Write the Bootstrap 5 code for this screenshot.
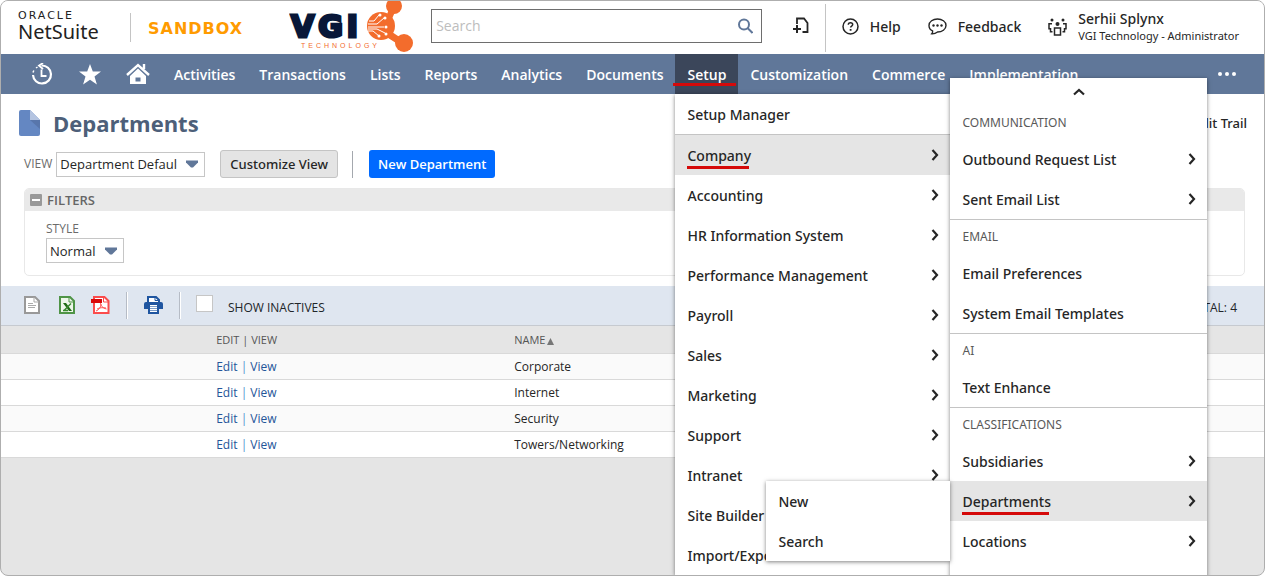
<!DOCTYPE html>
<html lang="en">
<head>
<meta charset="utf-8">
<meta name="viewport" content="width=device-width, initial-scale=1">
<title>Departments - NetSuite</title>
<link href="https://cdn.jsdelivr.net/npm/bootstrap@5.3.0/dist/css/bootstrap.min.css" rel="stylesheet">
<style>
  body { font-family: "Open Sans", "Noto Sans", sans-serif; font-size: 13px; line-height: 20px; color: #262626; background: #fff; }
  a { text-decoration: none; color: inherit; }
  svg { display: block; flex: none; }
  .page-frame { border: 1px solid #aeaeae; border-radius: 8px; background: #e5e5e5; }
  .medium { font-family: "Noto Sans", sans-serif; font-weight: 500; }

  .top-bar { height: 53px; background: #fff; padding: 0 25px 0 17px; }
  .brand { width: 81px; padding-bottom: 4px; }
  .brand-oracle { font: 11px/13px "DejaVu Sans", sans-serif; letter-spacing: 2px; color: #222; }
  .brand-suite { font: 20px/20px "Noto Sans", sans-serif; color: #222; }
  .rule { width: 1px; background: #c4c4c4; }
  .rule-brand { height: 29px; margin: 0 17px 0 31px; }
  .rule-top { height: 48px; margin: 0 16px; }
  .rule-view { height: 27px; margin: 0 16px 0 14px; background: #a4a8ae; }
  .sandbox-tag { font: bold 16px/20px "DejaVu Sans", sans-serif; color: #ff9b00; letter-spacing: 1px; padding-top: 2px; }
  .vgi-logo { margin: 0 16px 0 46px; }
  .search-box { border: 1px solid #6e6e6e; height: 34px; margin-right: 31px; margin-bottom: 3px; }
  .search-box input { font-size: 14px; color: #262626; outline: 0; }
  .search-box input::placeholder { color: #bdbdbd; }
  .top-link { font-size: 14px; gap: 11px; margin-right: 27px; padding-bottom: 2px; }
  .user-link { gap: 11px; padding-bottom: 1px; }
  .user-name { font-size: 14px; line-height: 18px; }
  .user-role { font-size: 11px; line-height: 16px; font-weight: 400; }

  .main-nav { background: #607799; height: 40px; padding: 0 17px; }
  .main-nav .nav-cell { position: relative; display: flex; align-items: center; height: 40px; padding: 2px 12px 0; color: #fff; font-size: 14px; font-weight: 600; white-space: nowrap; }
  .main-nav .nav-icon { width: 48px; padding: 0; justify-content: center; }
  .main-nav .more-cell { margin-right: -4px; }
  .main-nav .current { background: #3b465a; }
  .marked { position: relative; }
  .marked::after { content: ""; position: absolute; left: 0; right: 2px; bottom: -3px; height: 3px; background: #d50a0a; }
  .nav-cell.marked::after { left: -2px; bottom: 8px; }

  .fly { position: absolute; background: #fff; box-shadow: 0 1px 4px rgba(0,0,0,.5); margin: 0; padding: 0; list-style: none; color: #262626; font-size: 14px; z-index: 10; }
  .fly-setup { left: 0; top: 100%; width: 275px; }
  .fly-company { left: 100%; top: -57px; width: 257px; min-height: 520px; }
  .fly-departments { right: 100%; top: 0; width: 184px; }
  .fly li { position: relative; }
  .fly .entry { display: flex; align-items: center; justify-content: space-between; height: 40px; padding: 2px 12px 0; }
  .fly .entry svg { margin: 0 -1px 2px 0; }
  .fly .open > .entry { background: #e5e5e5; }
  .fly .first-entry { border-bottom: 1px solid #c4c4c4; }
  .fly .group-title { height: 33px; padding: 7px 12px 0; font-size: 12px; font-weight: 400; color: #595959; }
  .fly .ruled { height: 34px; border-top: 1px solid #c4c4c4; }
  .fly .scroll-up { height: 28px; width: 100%; border: 0; background: none; display: flex; align-items: center; justify-content: center; }

  .content-area { background: #fff; padding: 14px 17px 10px 18px; }
  .page-title { font-size: 22px; line-height: 30px; font-weight: 700; color: #4d5f79; margin: 0 0 0 13px; }
  .field-tag { font-size: 12px; color: #6b6b6b; }
  .view-row { margin-top: 12px; padding-left: 5px; }
  .pick { appearance: none; height: 25px; border: 1px solid #c6c6c6; border-radius: 0; padding: 0 27px 0 3px; font-size: 13px; color: #262626;
    background: #fff url("data:image/svg+xml,%3Csvg xmlns='http://www.w3.org/2000/svg' width='14' height='8'%3E%3Cpath d='M1 .5h12v2L8 7.5H6L1 2.500z' fill='%23607799'/%3E%3C/svg%3E") no-repeat right 5px center; }
  .pick-view { width: 149px; margin-right: 15px; }
  .pick-style { width: 78px; }
  .act { height: 28px; border-radius: 3px; font-size: 13px; line-height: 20px; padding: 0 9px; }
  .act-plain { background: #e4e4e4; border: 1px solid #c4c4c4; color: #262626; }
  .act-main { background: #006aff; border: 0; color: #fff; font-weight: 600; }
  .filter-box { border: 1px solid #e8e8e8; border-radius: 5px; margin: 10px 2px 0 5px; height: 88px; overflow: hidden; }
  .filter-head { background: #e9e9e9; height: 22px; font-size: 13px; font-weight: 600; color: #666; padding: 0 5px; gap: 5px; }
  .filter-body { padding: 8px 21px 0; }
  .filter-body .field-tag { line-height: 19px; }
  .tool-bar { background: #dfe6f0; height: 39px; padding: 0 27px 0 23px; }
  .tool-bar button { margin-bottom: 2px; }
  .tool-bar .divider { width: 2px; height: 27px; background: #b6bcc6; border-right: 1px solid #fff; }
  .tool-excel { margin-left: 19px; }
  .tick { appearance: none; width: 17px; height: 17px; border: 1px solid #c6c6c6; background: #fff; margin: 0 15px 4px -1px; }
  .list-table { table-layout: fixed; width: 100%; border-top: 1px solid #c6cad0; font-size: 12px; }
  .list-table th { height: 28px; font-size: 11px; font-weight: 400; color: #555; padding: 1px 3px 0; border-bottom: 1px solid #d9d9d9; }
  .list-table td { height: 26px; line-height: 18px; padding: 1px 3px 0; border-bottom: 1px solid #d9d9d9; background: #fff; }
  .list-table tbody tr:nth-child(odd) td { background: #fafafa; }
  .list-table td a { color: #255599; }
  .list-table td .bar { color: #4d8fd0; }
  .sort-mark { display: inline-block; }
</style>
</head>
<body>
<svg width="0" height="0" class="position-absolute">
  <symbol id="chev" viewBox="0 0 8 12"><path d="M1.500 1l4.500 5-4.500 5" fill="none" stroke="#262626" stroke-width="2.200"/></symbol>
</svg>
<div class="page-frame min-vh-100 overflow-hidden">

  <header class="top-bar d-flex align-items-center">
    <a href="#" class="brand d-flex flex-column"><span class="brand-oracle">ORACLE</span><span class="brand-suite">NetSuite</span></a>
    <span class="rule rule-brand"></span>
    <span class="sandbox-tag">SANDBOX</span>
    <svg class="vgi-logo" width="126" height="53" viewBox="0 0 126 53" role="img" aria-label="VGI Technology">
      <text x="2" y="36" font-family="DejaVu Sans" font-weight="bold" font-size="30" letter-spacing="4" fill="#081738" stroke="#081738" stroke-width="3">VGI</text>
      <text x="12" y="47" font-family="Liberation Sans" font-size="7" letter-spacing="3" fill="#f36c2c">TECHNOLOGY</text>
      <g fill="#f36c2c"><circle cx="92" cy="25" r="14"/><circle cx="105" cy="5" r="8"/><circle cx="115" cy="42" r="9"/><path d="M100 8l6 3-4 9-5-4zM100 29l12 8-5 5-11-7z"/></g>
      <g fill="none" stroke="#fff" stroke-width="1"><path d="M79 23h9l7-6M79 26h16M79 28h9l8 4M79 30h5l6 5M80 20h5l5-6"/></g>
      <g fill="#fff"><circle cx="96" cy="17" r="1.500"/><circle cx="97" cy="26" r="1.500"/><circle cx="97" cy="33" r="1.500"/><circle cx="90" cy="35" r="1.500"/><circle cx="91" cy="14" r="1.500"/></g>
    </svg>
    <div class="search-box d-flex align-items-center flex-fill">
      <input type="text" class="flex-fill border-0 bg-transparent px-1" placeholder="Search" aria-label="Search">
      <button class="border-0 bg-transparent p-0 me-1 pe-1" aria-label="Run search"><svg width="15" height="16" viewBox="0 0 15 16" fill="none" stroke="#607799" stroke-width="2"><circle cx="6" cy="6.500" r="5"/><path d="M9.500 10l5 5"/></svg></button>
    </div>
    <button class="border-0 bg-transparent p-0 pb-1" aria-label="Create new"><svg width="16" height="17" viewBox="0 0 16 17" fill="none" stroke="#262626"><path d="M4 7V1.500h7L14.500 6v9H9.500" stroke-width="1.800"/><path d="M0 12h8M4 8v8" stroke-width="2"/></svg></button>
    <span class="rule rule-top"></span>
    <a href="#" class="top-link medium d-flex align-items-center"><svg width="17" height="17" viewBox="0 0 17 17" fill="none" stroke="#262626" stroke-width="1.500"><circle cx="8.500" cy="8.500" r="7.500"/><path d="M6.300 6.800c0-3 4.400-2.600 4.400-.2 0 1.500-2.100 1.400-2.100 3"/><path d="M8.600 11v1.800" stroke-width="1.800"/></svg>Help</a>
    <a href="#" class="top-link medium d-flex align-items-center"><svg width="19" height="17" viewBox="0 0 19 17"><path d="M9.500 1C14 1 18 3.500 18 7.500S14 14 9.500 14c-1.700 1.300-3.600 2-5.700 1.800.8-.8 1-1.600.8-2.900C2.500 12 1 10 1 7.500 1 3.500 5 1 9.500 1z" fill="none" stroke="#262626" stroke-width="1.400"/><g fill="#262626"><circle cx="5.500" cy="7.500" r="1.200"/><circle cx="9.500" cy="7.500" r="1.200"/><circle cx="13.500" cy="7.500" r="1.200"/></g></svg>Feedback</a>
    <a href="#" class="user-link medium d-flex align-items-center"><svg width="19" height="18" viewBox="0 0 19 18"><g fill="none" stroke="#262626" stroke-width="1.500"><path d="M6.500 10h6v7h-6zM4 5.800H1v5h1.500v3h2M15 5.800h3v5h-1.500v3h-2"/></g><g fill="#262626"><circle cx="9.500" cy="6" r="2"/><circle cx="4" cy="2" r="1.500"/><circle cx="15" cy="2" r="1.500"/></g></svg>
      <span class="d-flex flex-column text-nowrap"><span class="user-name">Serhii Splynx</span><span class="user-role">VGI Technology - Administrator</span></span></a>
  </header>

  <nav class="main-nav d-flex">
    <a href="#" class="nav-cell nav-icon" aria-label="Recent records"><svg width="22" height="22" viewBox="0 0 22 22" fill="none" stroke="#fff" stroke-width="2.200"><path d="M10.500 2.500A9 9 0 1 1 2 12" /><path d="M12 0L8 2.600 12 6" stroke-width="1.800"/><path d="M10.500 6.500V13H15.500" stroke-width="1.800"/><path d="M2 9.500l.8-2M5 5l1.500-1" stroke-width="1.500"/></svg></a>
    <a href="#" class="nav-cell nav-icon" aria-label="Shortcuts"><svg width="22" height="21" viewBox="0 0 22 21" fill="#fff"><path d="M11 0l2.800 7.600H22l-6.500 5 2.400 8L11 15.800 4.100 20.600l2.400-8L0 7.600h8.200z"/></svg></a>
    <a href="#" class="nav-cell nav-icon" aria-label="Home"><svg width="24" height="22" viewBox="0 0 24 22"><path d="M1 12L12 2l11 10M18 6V1" fill="none" stroke="#fff" stroke-width="2.400"/><path fill-rule="evenodd" fill="#fff" d="M4 13l8-7.500 8 7.500v8H4zm5.500 1.500v4h5v-4z"/></svg></a>
    <a href="#" class="nav-cell">Activities</a>
    <a href="#" class="nav-cell">Transactions</a>
    <a href="#" class="nav-cell">Lists</a>
    <a href="#" class="nav-cell">Reports</a>
    <a href="#" class="nav-cell">Analytics</a>
    <a href="#" class="nav-cell">Documents</a>
    <div class="position-relative">
      <a href="#" class="nav-cell current marked">Setup</a>
      <ul class="fly fly-setup medium">
        <li class="first-entry"><a href="#" class="entry">Setup Manager</a></li>
        <li class="open"><a href="#" class="entry"><span class="marked">Company</span><svg width="8" height="12"><use href="#chev"/></svg></a>
          <ul class="fly fly-company">
            <li><button class="scroll-up" aria-label="Scroll up"><svg width="12" height="8" viewBox="0 0 12 8"><path d="M1 6.500l5-4.500 5 4.500" fill="none" stroke="#262626" stroke-width="2.200"/></svg></button></li>
            <li class="group-title">COMMUNICATION</li>
            <li><a href="#" class="entry">Outbound Request List<svg width="8" height="12"><use href="#chev"/></svg></a></li>
            <li><a href="#" class="entry">Sent Email List<svg width="8" height="12"><use href="#chev"/></svg></a></li>
            <li class="group-title ruled">EMAIL</li>
            <li><a href="#" class="entry">Email Preferences</a></li>
            <li><a href="#" class="entry">System Email Templates</a></li>
            <li class="group-title ruled">AI</li>
            <li><a href="#" class="entry">Text Enhance</a></li>
            <li class="group-title ruled">CLASSIFICATIONS</li>
            <li><a href="#" class="entry">Subsidiaries<svg width="8" height="12"><use href="#chev"/></svg></a></li>
            <li class="open"><a href="#" class="entry"><span class="marked">Departments</span><svg width="8" height="12"><use href="#chev"/></svg></a>
              <ul class="fly fly-departments">
                <li><a href="#" class="entry">New</a></li>
                <li><a href="#" class="entry">Search</a></li>
              </ul>
            </li>
            <li><a href="#" class="entry">Locations<svg width="8" height="12"><use href="#chev"/></svg></a></li>
          </ul>
        </li>
        <li><a href="#" class="entry">Accounting<svg width="8" height="12"><use href="#chev"/></svg></a></li>
        <li><a href="#" class="entry">HR Information System<svg width="8" height="12"><use href="#chev"/></svg></a></li>
        <li><a href="#" class="entry">Performance Management<svg width="8" height="12"><use href="#chev"/></svg></a></li>
        <li><a href="#" class="entry">Payroll<svg width="8" height="12"><use href="#chev"/></svg></a></li>
        <li><a href="#" class="entry">Sales<svg width="8" height="12"><use href="#chev"/></svg></a></li>
        <li><a href="#" class="entry">Marketing<svg width="8" height="12"><use href="#chev"/></svg></a></li>
        <li><a href="#" class="entry">Support<svg width="8" height="12"><use href="#chev"/></svg></a></li>
        <li><a href="#" class="entry">Intranet<svg width="8" height="12"><use href="#chev"/></svg></a></li>
        <li><a href="#" class="entry">Site Builder</a></li>
        <li><a href="#" class="entry">Import/Export</a></li>
      </ul>
    </div>
    <a href="#" class="nav-cell">Customization</a>
    <a href="#" class="nav-cell">Commerce</a>
    <a href="#" class="nav-cell">Implementation</a>
    <a href="#" class="nav-cell nav-icon more-cell ms-auto" aria-label="More"><svg width="18" height="4" viewBox="0 0 18 4" fill="#fff"><circle cx="2" cy="2" r="2"/><circle cx="9" cy="2" r="2"/><circle cx="16" cy="2" r="2"/></svg></a>
  </nav>

  <main>
    <div class="content-area">
      <div class="d-flex align-items-center">
        <svg width="21" height="26" viewBox="0 0 21 26"><path d="M2 0h9l10 10v14a2 2 0 0 1-2 2H2a2 2 0 0 1-2-2V2a2 2 0 0 1 2-2z" fill="#6487c2"/><path d="M11 10h10v9z" fill="#5876ab"/><path d="M11 0l10 10H11z" fill="#b4c4e1"/></svg>
        <h1 class="page-title">Departments</h1>
        <a href="#" class="medium ms-auto">Audit Trail</a>
      </div>
      <div class="view-row d-flex align-items-center">
        <label class="field-tag me-1" for="view">VIEW</label>
        <select id="view" class="pick pick-view"><option>Department Default</option></select>
        <button class="act act-plain medium">Customize View</button>
        <span class="rule rule-view"></span>
        <button class="act act-main">New Department</button>
      </div>
      <section class="filter-box">
        <div class="filter-head d-flex align-items-center"><svg width="12" height="12" viewBox="0 0 12 12"><rect width="12" height="12" rx="1" fill="#999"/><path d="M2 6h8" stroke="#fff" stroke-width="2"/></svg><span>FILTERS</span></div>
        <div class="filter-body d-flex flex-column align-items-start">
          <label class="field-tag" for="style">STYLE</label>
          <select id="style" class="pick pick-style"><option>Normal</option></select>
        </div>
      </section>
    </div>
    <div class="tool-bar d-flex align-items-center">
      <button class="border-0 bg-transparent p-0" aria-label="Export CSV"><svg width="16" height="18" viewBox="0 0 16 18"><path d="M1 1h10l4 4v12H1z" fill="#fff" stroke="#999" stroke-width="2"/><path d="M10 1v5h5M4 7.500h5M4 9.500h8M4 11.500h7" fill="none" stroke="#aaa"/></svg></button>
      <button class="border-0 bg-transparent p-0 tool-excel" aria-label="Export Excel"><svg width="16" height="18" viewBox="0 0 16 18"><path d="M1 1h10l4 4v12H1z" fill="#eef7ea" stroke="#4f9447" stroke-width="2"/><path d="M10 1v5h5" fill="none" stroke="#4f9447"/><path d="M4 7h3l6 8h-3z" fill="#1f6b14"/><path d="M12 7.500L5 14.500M9 14.500H4" stroke="#3b8a30" stroke-width="1.500"/></svg></button>
      <button class="border-0 bg-transparent p-0 ms-3" aria-label="Export PDF"><svg width="19" height="18" viewBox="0 0 19 18"><path d="M3 1h10.500L17.500 5v12H3z" fill="#fff" stroke="#fb4c4c" stroke-width="2"/><path d="M12.500 1v5h5" fill="none" stroke="#fb4c4c"/><path d="M0 3h11v4H0z" fill="#d80808"/><path d="M9.500 7c.5 3 2 5 6 6M10 8c0 3-2 6-5 7M6 13c3-1.500 5-1.500 9-1" fill="none" stroke="#f55"/></svg></button>
      <span class="divider mx-3"></span>
      <button class="border-0 bg-transparent p-0" aria-label="Print"><svg width="19" height="18" viewBox="0 0 19 18"><path d="M4 6V1h8l3 3v2" fill="#fff" stroke="#1f55a0" stroke-width="2"/><path d="M11 1v3.500h4" fill="none" stroke="#1f55a0"/><path d="M2 6h15a2 2 0 0 1 2 2v5h-4v5H4v-5H0V8a2 2 0 0 1 2-2z" fill="#1f55a0"/><path d="M6 9h7v7H6z" fill="#fff"/><path d="M6 10.500h7M6 12.500h7M6 14.500h7" stroke="#7b9cc8"/></svg></button>
      <span class="divider mx-3"></span>
      <input type="checkbox" id="inactive" class="tick">
      <label class="field-tag text-dark pt-1" for="inactive">SHOW INACTIVES</label>
      <span class="ms-auto field-tag text-dark pt-1">TOTAL: 4</span>
    </div>
    <table class="list-table">
      <colgroup><col style="width:16.800%"><col style="width:23.600%"><col></colgroup>
      <thead><tr><th></th><th>EDIT | VIEW</th><th>NAME<svg class="sort-mark" width="9" height="7" viewBox="-2 0 9 7"><path d="M3.500 0L7 7H0z" fill="#777"/></svg></th></tr></thead>
      <tbody>
        <tr><td></td><td><a href="#">Edit</a> <span class="bar">|</span> <a href="#">View</a></td><td>Corporate</td></tr>
        <tr><td></td><td><a href="#">Edit</a> <span class="bar">|</span> <a href="#">View</a></td><td>Internet</td></tr>
        <tr><td></td><td><a href="#">Edit</a> <span class="bar">|</span> <a href="#">View</a></td><td>Security</td></tr>
        <tr><td></td><td><a href="#">Edit</a> <span class="bar">|</span> <a href="#">View</a></td><td>Towers/Networking</td></tr>
      </tbody>
    </table>
  </main>
</div>
<script src="https://cdn.jsdelivr.net/npm/bootstrap@5.3.0/dist/js/bootstrap.bundle.min.js"></script>
</body>
</html>
